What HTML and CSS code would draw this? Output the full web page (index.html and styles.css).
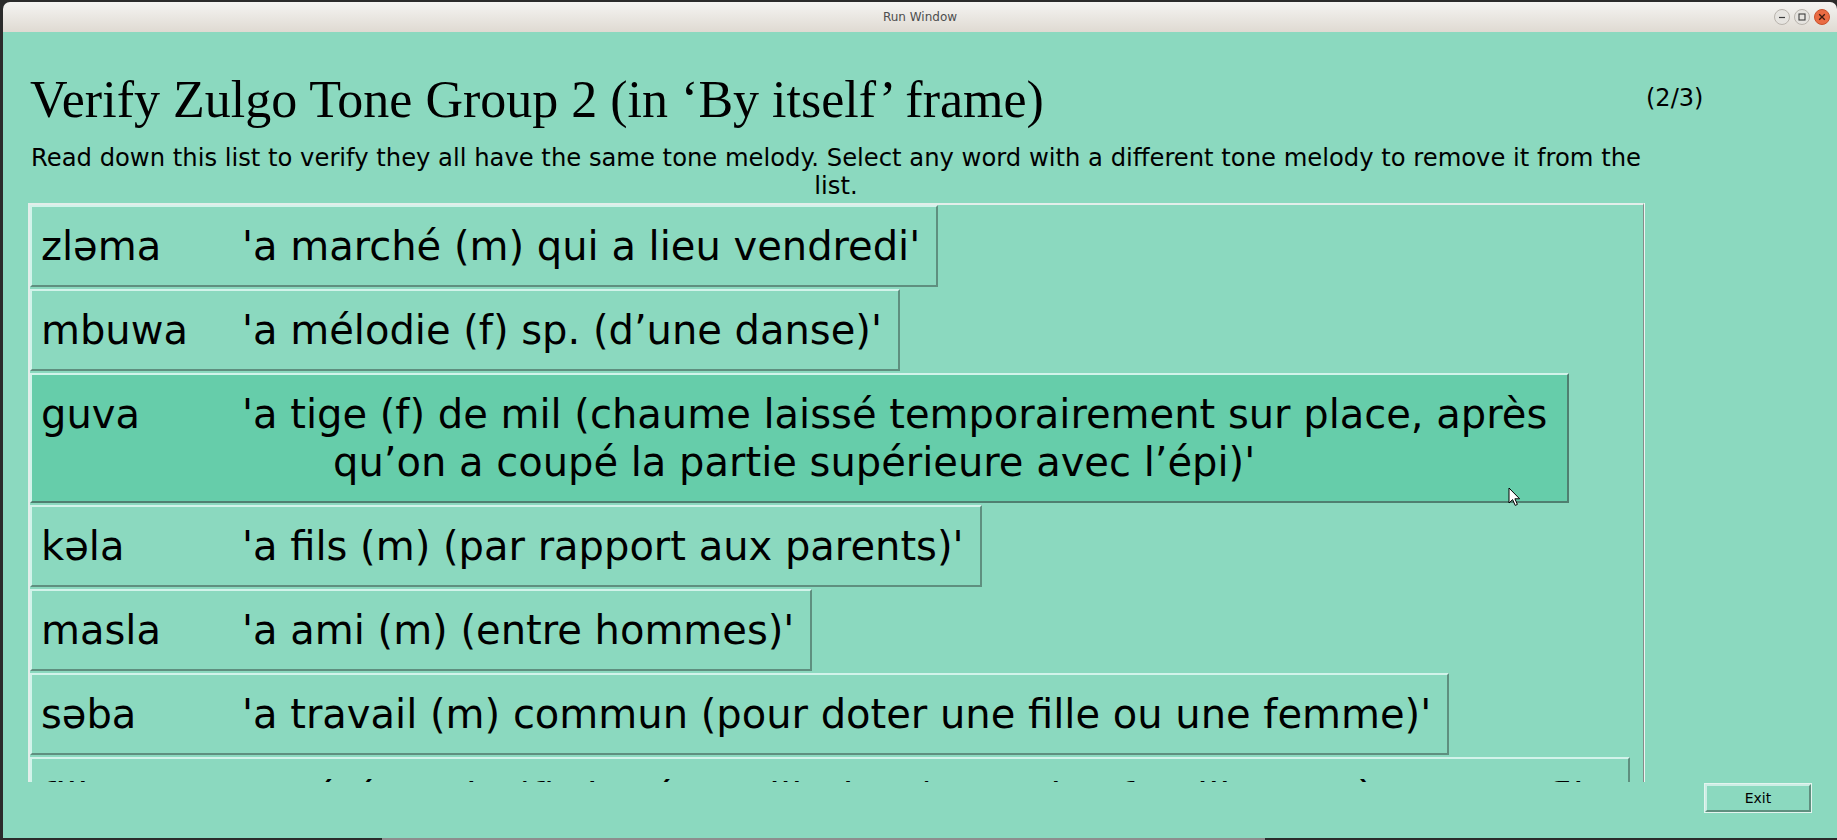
FILE: index.html
```html
<!DOCTYPE html>
<html lang="en">
<head>
    <meta charset="UTF-8">
    <title>Run Window</title>
    <link rel="stylesheet" href="styles.css">
</head>
<body>

<div class="screen">
    <div class="titlebar">
        <span></span>
        <span class="titlebar-text">Run Window</span>
        <svg class="win-controls" width="60" height="20" viewBox="0 0 60 20">
            <circle cx="10" cy="10" r="7.5" fill="#e6e4e0" stroke="#b9b4ad"/>
            <line x1="7" y1="10.5" x2="13" y2="10.5" stroke="#3c3c3c" stroke-width="1.2"/>
            <circle cx="30" cy="10" r="7.5" fill="#e6e4e0" stroke="#b9b4ad"/>
            <rect x="27" y="7" width="6" height="6" fill="none" stroke="#3c3c3c" stroke-width="1.1"/>
            <circle cx="50" cy="10" r="7.5" fill="#ea6b43" stroke="#c9512c"/>
            <path d="M47.2 7.2 L52.8 12.8 M52.8 7.2 L47.2 12.8" stroke="#3a1a10" stroke-width="1.3"/>
        </svg>
    </div>

    <div class="app">
        <div class="layout">
            <h1 class="heading">Verify Zulgo Tone Group 2 (in ‘By itself’ frame)</h1>
            <div class="progress">(2/3)</div>

            <p class="instructions">Read down this list to verify they all have the same tone melody. Select any word with a different tone melody to remove it from the list.</p>

            <div class="word-list">
                <div class="word-row"><span class="word">zləma</span><span class="gloss">'a marché (m) qui a lieu vendredi'</span></div>
                <div class="word-row"><span class="word">mbuwa</span><span class="gloss">'a mélodie (f) sp. (d’une danse)'</span></div>
                <div class="word-row active"><span class="word">guva</span><span class="gloss">'a tige (f) de mil (chaume laissé temporairement sur place, après<br>qu’on a coupé la partie supérieure avec l’épi)'</span></div>
                <div class="word-row"><span class="word">kəla</span><span class="gloss">'a fils (m) (par rapport aux parents)'</span></div>
                <div class="word-row"><span class="word">masla</span><span class="gloss">'a ami (m) (entre hommes)'</span></div>
                <div class="word-row"><span class="word">səba</span><span class="gloss">'a travail (m) commun (pour doter une fille ou une femme)'</span></div>
                <div class="word-row"><span class="word">filla</span><span class="gloss">'a cérémonie (f) de réconciliation (entre les familles après un conflit,<br>quand on partage la bière)'</span></div>
            </div>

            <div class="actions">
                <button type="button" class="exit-btn">Exit</button>
            </div>
        </div>

        <svg class="cursor" width="13" height="20" viewBox="0 0 13 20">
            <path d="M1 1 L1 16 L4.6 12.6 L7.2 18.4 L9.4 17.4 L6.9 11.8 L11.6 11.8 Z" fill="#fff" stroke="#000" stroke-width="1" stroke-linejoin="round"/>
        </svg>
    </div>

    <div class="desk-edge"><span class="desk-bar"></span></div>
</div>

</body>
</html>
```

FILE: styles.css
```css
body {
    margin: 0;
    padding: 0;
    width: 1837px;
    height: 840px;
    overflow: hidden;
    background-color: #2b2b2b;
    font-family: "DejaVu Sans", sans-serif;
    color: #000;
}

.screen {
    margin-left: 3px;
    height: 840px;
    display: flex;
    flex-direction: column;
}

.titlebar {
    height: 30px;
    margin-top: 2px;
    border-radius: 7px 7px 0 0;
    background: linear-gradient(#f5f4f2, #dfdad2);
    display: grid;
    grid-template-columns: 1fr auto 1fr;
    align-items: center;
}

.titlebar-text {
    font-size: 12px;
    color: #4e4e4e;
}

.win-controls {
    justify-self: end;
    margin-right: 5px;
}

.app {
    flex: 1;
    position: relative;
    overflow: hidden;
    background-color: #8bd9bf;
}

.layout {
    display: grid;
    grid-template-columns: 1616px 1fr;
    align-items: start;
    padding: 42px 0 0 25px;
}

.heading {
    grid-column: 1;
    grid-row: 1;
    margin: 0 0 0 2px;
    font-family: "Liberation Serif", serif;
    font-weight: normal;
    font-size: 52px;
    line-height: 51px;
}

.progress {
    grid-column: 2;
    grid-row: 1;
    margin: 10px 0 0 2px;
    font-size: 24px;
}

.instructions {
    grid-column: 1;
    grid-row: 2;
    margin: 19px 0 0;
    font-size: 24.25px;
    line-height: 28px;
    text-align: center;
}

.word-list {
    grid-column: 1;
    grid-row: 3;
    margin-top: 3px;
    height: 579px;
    box-sizing: border-box;
    overflow: hidden;
    border-top: 2px solid #e3eeea;
    border-left: 2px solid #e3eeea;
    border-right: 1px solid #858c89;
    box-shadow: 1px 0 0 #eef4f1;
    display: flex;
    flex-direction: column;
    align-items: flex-start;
}

.word-row {
    flex-shrink: 0;
    padding: 15px 16px 15px 9px;
    margin-bottom: 2px;
    border: 2px solid;
    border-color: #d2f3ea #5f8f7f #5f8f7f #d2f3ea;
    background-color: #8bd9bf;
    font-size: 40px;
    line-height: 48px;
    text-align: center;
    white-space: nowrap;
}

.word-row.active {
    background-color: #66cdaa;
    border-color: #d2f3ea #4f7f70 #4f7f70 #d2f3ea;
    padding-right: 20px;
}

.word {
    display: inline-block;
    width: 201px;
    text-align: left;
}

.actions {
    grid-column: 2;
    grid-row: 4;
    margin: 2px 0 0 61px;
}

.exit-btn {
    width: 106px;
    height: 28px;
    padding: 0;
    border: 2px solid;
    border-color: #cdeee5 #5f8f7f #5f8f7f #cdeee5;
    box-shadow: 0 0 0 1px #e4f4ef;
    background-color: #8bd9bf;
    font-family: "DejaVu Sans", sans-serif;
    font-size: 14px;
    color: #000;
}

.cursor {
    position: absolute;
    left: 1505px;
    top: 455px;
}

.desk-edge {
    height: 2px;
    background-color: #2b2b2b;
}

.desk-bar {
    display: block;
    width: 883px;
    height: 2px;
    margin-left: 379px;
    background-color: #8e8e8e;
}
```
